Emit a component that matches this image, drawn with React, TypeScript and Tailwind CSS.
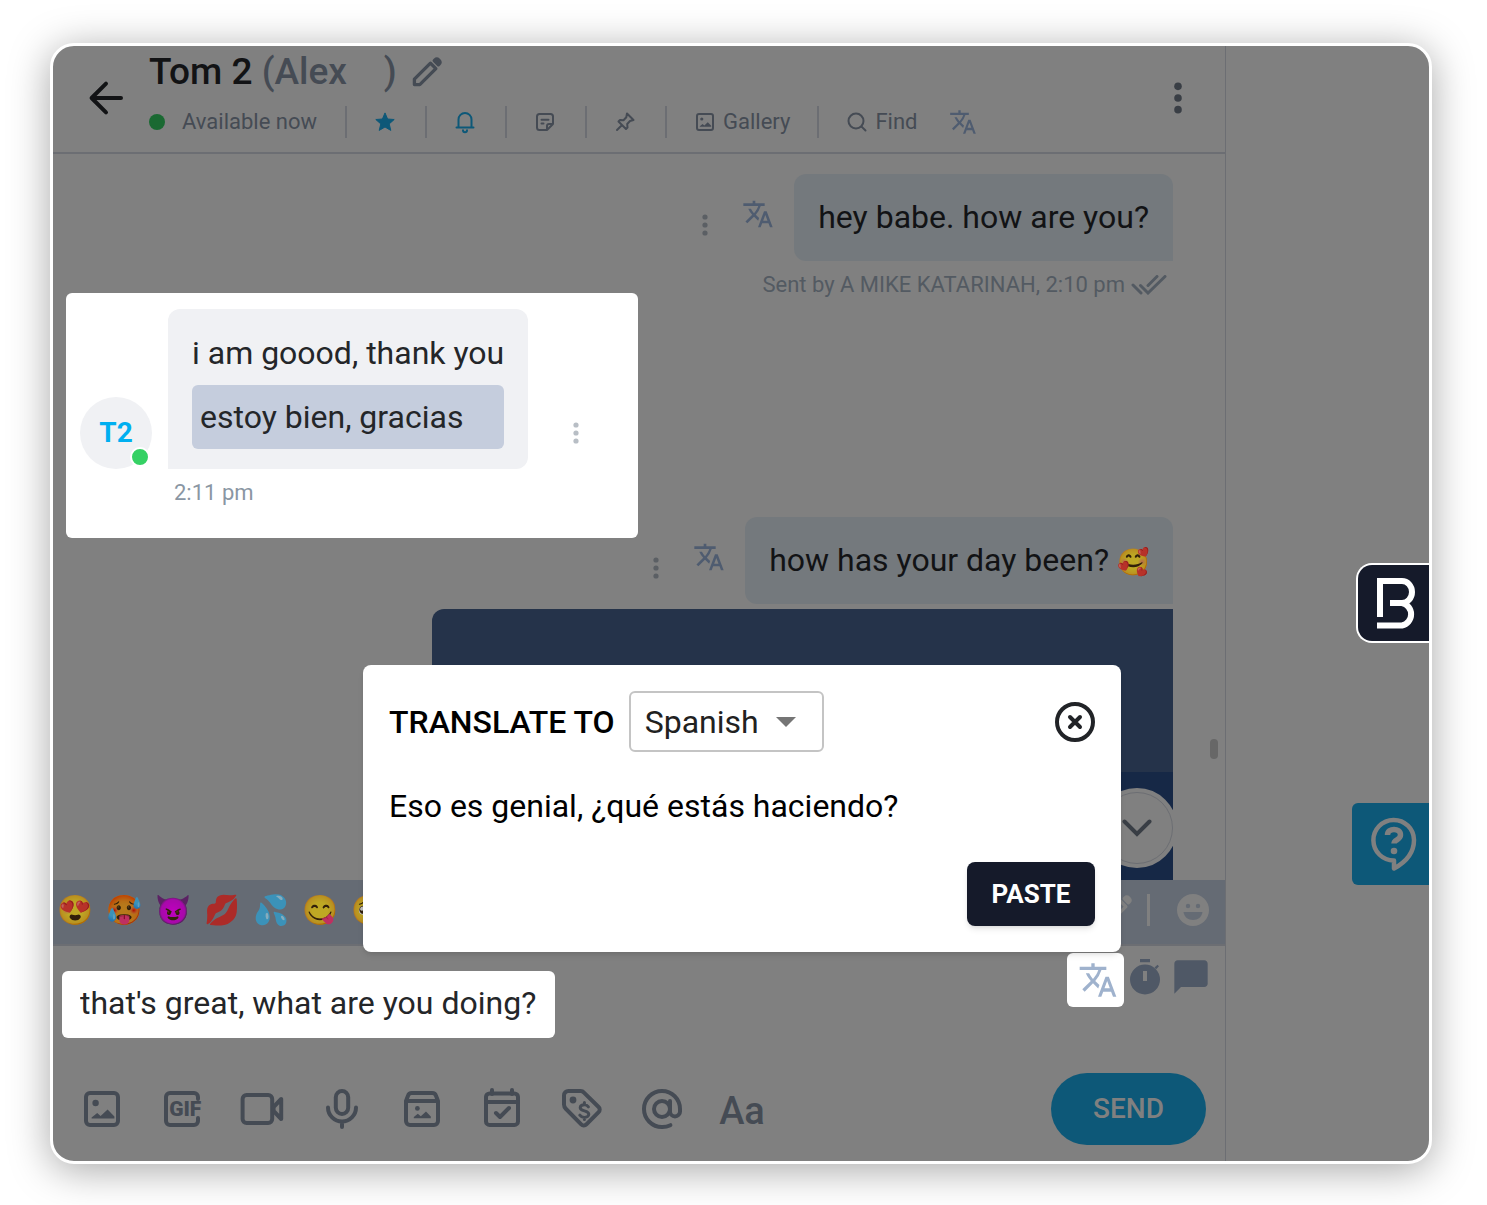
import { useState } from "react";
import type { ReactNode } from "react";
import { MdChatBubble, MdTranslate } from "react-icons/md";

const EMOJIS = ["😍", "🥵", "😈", "💋", "💦", "😋", "🥺"];
const LANGUAGES = ["Spanish", "French", "German", "Italian"];

function Dots({ className }: { className: string }) {
  return (
    <svg viewBox="0 0 6 22" fill="currentColor" className={className} aria-hidden="true">
      <circle cx="3" cy="3" r="2.6" />
      <circle cx="3" cy="11" r="2.6" />
      <circle cx="3" cy="19" r="2.6" />
    </svg>
  );
}

function Icon({ children, className = "size-12", strokeWidth = 2 }: { children: ReactNode; className?: string; strokeWidth?: number }) {
  return (
    <svg
      viewBox="0 0 24 24"
      fill="none"
      stroke="currentColor"
      strokeWidth={strokeWidth}
      strokeLinecap="round"
      strokeLinejoin="round"
      className={className}
      aria-hidden="true"
    >
      {children}
    </svg>
  );
}

function Pencil({ className }: { className: string }) {
  return (
    <Icon className={className} strokeWidth={2.2}>
      <path d="M3.6 20.4v-3.6L14.3 6.100l3.600 3.600L7.200 20.400z" />
      <path d="M17.300 3.900a1.800 1.800 0 0 1 2.500 0l.3.3a1.800 1.800 0 0 1 0 2.500l-.5.5-2.800-2.800z" fill="currentColor" />
    </Icon>
  );
}

const imageShape = (
  <>
    <rect x="4" y="4" width="16" height="16" rx="2" />
    <circle cx="8.8" cy="9" r="1.6" fill="currentColor" stroke="none" />
    <path d="M6.8 16.8v-.6L9.6 14l1.7 1.5 3.5-3.3 3.4 3.5v1.1z" fill="currentColor" stroke="none" />
  </>
);

const TOOLS: { label: string; icon: ReactNode }[] = [
  { label: "Add image", icon: <Icon>{imageShape}</Icon> },
  {
    label: "Add GIF",
    icon: (
      <Icon>
        <path d="M20 7V6a2 2 0 0 0-2-2H6a2 2 0 0 0-2 2v12a2 2 0 0 0 2 2h12a2 2 0 0 0 2-2v-1.5" />
        <text x="5.6" y="15.7" fontSize="10.5" fontWeight="900" fill="currentColor" stroke="none" className="font-[Roboto,sans-serif]">
          GIF
        </text>
      </Icon>
    ),
  },
  {
    label: "Record video",
    icon: (
      <Icon>
        <rect x="2.3" y="5" width="14.8" height="14" rx="2" />
        <path d="M17.8 11l3.800-4v10l-3.800-4z" />
      </Icon>
    ),
  },
  {
    label: "Record voice",
    icon: (
      <Icon>
        <rect x="8.9" y="3" width="6.2" height="11.5" rx="3.1" />
        <path d="M5 11.200a7 7 0 0 0 14 0M12 18.500V21" />
      </Icon>
    ),
  },
  {
    label: "Open vault",
    icon: (
      <Icon>
        <path d="M4 8l1-2.600A2 2 0 0 1 6.900 4h10.200a2 2 0 0 1 1.900 1.400L20 8v10a2 2 0 0 1-2 2H6a2 2 0 0 1-2-2zM4.500 8h15" />
        <circle cx="9.7" cy="11.7" r="1.2" fill="currentColor" stroke="none" />
        <path d="M7.900 16.600v-.6l2-1.600 1.500 1.200 2.600-2.400 2.400 2.500v.9z" fill="currentColor" stroke="none" />
      </Icon>
    ),
  },
  {
    label: "Schedule",
    icon: (
      <Icon>
        <rect x="4" y="4.2" width="16" height="15.8" rx="1.8" />
        <path d="M4 8.500h16M7 2.500v2M17 2.500v2M9 14l2 2 4.500-4.500" />
      </Icon>
    ),
  },
  {
    label: "Set price",
    icon: (
      <Icon>
        <path d="M3 5.200V9.800a3 3 0 0 0 .9 2.100l7.700 7.800a1.800 1.800 0 0 0 2.600 0l6.100-6.100a1.800 1.800 0 0 0 0-2.600l-7.300-7.200A2.400 2.400 0 0 0 11.300 3H5.200A2.200 2.200 0 0 0 3 5.200z" />
        <circle cx="7.5" cy="7.5" r="1.7" fill="currentColor" stroke="none" />
        <path
          d="M15.200 10.900c-.5-.7-1.200-1-2-1-1.200 0-2.100.6-2.100 1.500 0 2 4.300 1.100 4.300 3.200 0 1-1 1.600-2.200 1.600-1 0-1.800-.4-2.300-1.100M13.200 8.800v1M13.200 16.300v1"
          strokeWidth="1.5"
        />
      </Icon>
    ),
  },
  {
    label: "Mention",
    icon: (
      <Icon>
        <circle cx="12" cy="12" r="4" />
        <path d="M16 8v5.200a2.500 2.500 0 0 0 5 0V12a9 9 0 1 0-9 9 9.600 9.600 0 0 0 4.200-.9" />
      </Icon>
    ),
  },
  { label: "Text format", icon: <span className="pt-1 text-[38px] leading-none font-medium">Aa</span> },
];

function HeaderCell({ label, children }: { label: string; children: ReactNode }) {
  return (
    <button type="button" aria-label={label} className="flex h-8 w-20 items-center justify-center border-l-2 border-[#6c6e73] pr-0.5">
      {children}
    </button>
  );
}

function ChatHeader() {
  return (
    <header className="flex items-center border-b-2 border-[#6c6e73] pr-[42px] pb-0.5 pl-[30px]">
      <button type="button" aria-label="Back" className="text-[#121315]">
        <Icon>
          <path d="M19 12H4.500M11.500 4.800L4.300 12l7.200 7.200" />
        </Icon>
      </button>
      <div className="min-w-0 flex-1 pt-1.5 pb-3 pl-[18px]">
        <h1 className="flex h-10 items-center text-[37px] font-medium whitespace-pre text-[#121315]">
          Tom 2 <span className="text-[#454b54]">(Alex{"    "})</span>
          <button type="button" aria-label="Edit name" className="ml-3 text-[#454b54]">
            <Pencil className="size-9" />
          </button>
        </h1>
        <div className="mt-[13px] flex items-center text-[22px] text-[#454b54]">
          <span className="size-4 rounded-full bg-[#1a6932]" />
          <span className="ml-[17px] pr-7 whitespace-nowrap">Available now</span>
          <HeaderCell label="Favourite">
            <svg viewBox="0 0 24 24" fill="#0d5878" stroke="#0d5878" strokeWidth="1" strokeLinejoin="round" className="size-6">
              <path d="M12 2.900l2.600 6.100 6.600.500-5 4.400 1.600 6.500L12 17l-5.800 3.400 1.600-6.500-5-4.400 6.600-.500z" />
            </svg>
          </HeaderCell>
          <HeaderCell label="Notifications">
            <Icon className="size-6 text-[#0d5878]">
              <path d="M3.500 17.500h17M5.500 17.300V9.500a6.500 6.500 0 0 1 13 0v7.800M10 20.300a2 2 0 0 0 4 0" />
            </Icon>
          </HeaderCell>
          <HeaderCell label="Notes">
            <Icon className="size-6">
              <path d="M20 14V6.500A2.500 2.500 0 0 0 17.500 4h-11A2.500 2.500 0 0 0 4 6.500v11A2.500 2.500 0 0 0 6.500 20H14zM20 14h-4a2 2 0 0 0-2 2v4M8.500 9.700h7M8.500 13.500h2" />
            </Icon>
          </HeaderCell>
          <HeaderCell label="Pin">
            <Icon className="size-6">
              <path d="M14 3.500l6.500 6.500-3.500 1-2.800 3 .3 3.500-1.500 1.500-7.500-7.500L7 10l3.500.300 2.800-3zM8.800 15.200L4 20" />
            </Icon>
          </HeaderCell>
          <button type="button" className="flex h-8 items-center gap-1.5 border-l-2 border-[#6c6e73] pr-[27px] pl-[26px]">
            <Icon className="size-6">{imageShape}</Icon>
            Gallery
          </button>
          <button type="button" className="flex h-8 items-center gap-1.5 border-l-2 border-[#6c6e73] pl-[26px]">
            <Icon className="size-6">
              <circle cx="11" cy="11" r="7.5" />
              <path d="M16.600 16.600L20.500 20.500" />
            </Icon>
            Find
          </button>
          <button type="button" aria-label="Translate chat" className="ml-8 text-[#4f5c70]">
            <MdTranslate className="size-7" />
          </button>
        </div>
      </div>
      <button type="button" aria-label="More options" className="text-[#393e45]">
        <Dots className="h-8 w-2.5" />
      </button>
    </header>
  );
}

function SentMessage({ children }: { children: ReactNode }) {
  return (
    <div className="flex items-start justify-end">
      <button type="button" aria-label="Message options" className="mt-10 text-[#5b5f64]">
        <Dots className="h-[22px] w-1.5" />
      </button>
      <button type="button" aria-label="Translate message" className="mt-6 ml-[34px] text-[#4f5c70]">
        <MdTranslate className="size-8" />
      </button>
      <p className="ml-5 rounded-xl rounded-br-none bg-[#74797d] px-6 py-5 text-[32px] leading-[47px] whitespace-nowrap text-[#121315]">
        {children}
      </p>
    </div>
  );
}

function ReceivedMessage() {
  return (
    <div className="ml-[13px] -mb-[21px] flex h-[245px] w-[572px] rounded-md bg-white p-4 pl-3.5">
      <div className="relative mt-[88px] flex size-[72px] items-center justify-center rounded-full bg-[#f0f1f4] text-[28px] font-bold text-[#00aff0]">
        T2
        <span className="absolute right-0.5 bottom-0.5 size-5 rounded-full border-2 border-white bg-[#35d164]" />
      </div>
      <div className="ml-4">
        <div className="rounded-xl rounded-bl-none bg-[#f0f1f4] px-6 py-5 text-[32px] text-[#242629]">
          <p className="leading-12 whitespace-nowrap">i am goood, thank you</p>
          <p className="mt-2 rounded-md bg-[#c5cddd] px-2 leading-16">estoy bien, gracias</p>
        </div>
        <p className="mt-2 ml-1.5 text-[22px] leading-8 text-[#8a96a3]">2:11 pm</p>
      </div>
      <button type="button" aria-label="Message options" className="mt-28 ml-[45px] self-start text-[#b8bec5]">
        <Dots className="h-6 w-1.5" />
      </button>
    </div>
  );
}

function TranslateDialog() {
  const [language, setLanguage] = useState("Spanish");

  return (
    <section
      role="dialog"
      aria-label="Translate"
      className="absolute right-[104px] bottom-[209px] w-[758px] rounded-lg bg-white p-[26px] text-[32px] text-black shadow-md"
    >
      <div className="flex items-center">
        <label htmlFor="language" className="font-medium whitespace-nowrap">
          TRANSLATE TO
        </label>
        <div className="relative ml-3.5">
          <select
            id="language"
            value={language}
            onChange={(e) => setLanguage(e.target.value)}
            className="h-[61px] w-[195px] appearance-none rounded-md border-2 border-[#c4c4c4] bg-white pl-3.5 text-[#212121]"
          >
            {LANGUAGES.map((name) => (
              <option key={name}>{name}</option>
            ))}
          </select>
          <svg viewBox="0 0 20 10" fill="#757575" className="pointer-events-none absolute top-[26px] right-7 h-2.5 w-5">
            <path d="M0 0h20L10 10z" />
          </svg>
        </div>
        <button type="button" aria-label="Close" className="ml-auto text-[#212327]">
          <svg viewBox="0 0 40 40" fill="none" stroke="currentColor" strokeWidth="4" strokeLinecap="round" className="size-10">
            <circle cx="20" cy="20" r="18" />
            <path d="M15 15l10 10M25 15L15 25" />
          </svg>
        </button>
      </div>
      <p className="mt-[30px] leading-12">Eso es genial, ¿qué estás haciendo?</p>
      <div className="mt-8 flex justify-end">
        <button type="button" className="h-16 w-32 rounded-lg bg-[#151a2a] text-[26px] font-bold text-white shadow-md">
          PASTE
        </button>
      </div>
    </section>
  );
}

function Composer() {
  const [draft, setDraft] = useState("that's great, what are you doing?");

  return (
    <footer>
      <div className="flex h-[66px] items-center border-b-2 border-[#6c6e73] bg-[#656b74] pr-[13px] pb-1">
        <div className="flex flex-1">
          {EMOJIS.map((emoji) => (
            <button key={emoji} type="button" className="w-[49px] pr-[5px] text-center text-[29px] leading-none brightness-75">
              {emoji}
            </button>
          ))}
        </div>
        <button type="button" aria-label="Edit emojis" className="text-[#808080]">
          <Pencil className="size-9" />
        </button>
        <span className="ml-3 h-8 w-[3px] bg-[#808080]" />
        <button type="button" aria-label="Emoji picker" className="ml-6 text-[#808080]">
          <svg viewBox="0 0 38 38" className="size-[38px]">
            <circle cx="19" cy="19" r="16" fill="currentColor" />
            <g fill="#656b74">
              <circle cx="14" cy="15" r="2.2" />
              <circle cx="24" cy="15" r="2.2" />
              <path d="M9.500 21h19c-.6 5-4.600 8-9.500 8s-8.900-3-9.500-8z" />
            </g>
          </svg>
        </button>
      </div>
      <div className="flex items-start justify-between pr-3.5 pl-[9px]">
        <input
          aria-label="Message"
          value={draft}
          onChange={(e) => setDraft(e.target.value)}
          className="mt-[25px] h-[67px] w-[493px] rounded-md bg-white px-[18px] pb-1 text-[32px] text-[#242629] outline-none"
        />
        <div className="mt-[7px] flex items-start text-[#4f5866]">
          <button type="button" aria-label="Translate draft" className="flex h-[54px] w-[57px] items-center justify-center rounded-md bg-white pl-1 text-[#9fb2cd]">
            <MdTranslate className="size-10" />
          </button>
          <button type="button" aria-label="Timer" className="ml-[5px] pt-1.5">
            <svg viewBox="0 0 32 36" fill="currentColor" className="h-9 w-8">
              <path fillRule="evenodd" d="M16 5.500a15 15 0 1 1 0 30 15 15 0 0 1 0-30zM14 12v10h4V12z" />
              <path d="M11 0h10v3.200H11zM25.500 8.500l3-2.800 1.500 1.500-2.800 3z" />
            </svg>
          </button>
          <button type="button" aria-label="Templates" className="ml-2.5 pt-1">
            <MdChatBubble className="size-10" />
          </button>
        </div>
      </div>
      <div className="mt-[35px] flex items-center justify-between pr-[19px] pb-4 pl-[9px]">
        <div className="flex text-[#454b54]">
          {TOOLS.map((tool) => (
            <button key={tool.label} type="button" aria-label={tool.label} className="flex h-12 w-20 items-center justify-center">
              {tool.icon}
            </button>
          ))}
        </div>
        <button type="button" className="h-[72px] w-[155px] rounded-full bg-[#0d5878] text-[28px] font-medium text-[#808080]">
          SEND
        </button>
      </div>
    </footer>
  );
}

function SideButtons() {
  return (
    <aside className="flex w-[203px] shrink-0 flex-col items-end pt-[517px]">
      <button type="button" aria-label="Assistant" className="flex h-20 w-[73px] items-center rounded-l-2xl border-2 border-r-0 border-white bg-[#151a2a] pl-[18px]">
        <svg viewBox="0 0 42 54" fill="none" stroke="#fff" strokeWidth="6" className="h-[54px] w-[42px]">
          <path d="M4 41V5h22a10 11 0 0 1 0 22H14M26 27a11.500 11.500 0 0 1 0 22.500H1" />
        </svg>
      </button>
      <button type="button" aria-label="Help" className="mt-40 flex h-[82px] w-[77px] items-center justify-center rounded-l-md bg-[#0d5878] pl-1.5 text-[#808080]">
        <svg viewBox="0 0 46 54" fill="none" stroke="currentColor" strokeWidth="4.5" strokeLinecap="round" strokeLinejoin="round" className="h-[54px] w-[46px]">
          <path d="M23 43.500A20.300 20.300 0 1 1 43 23c0 12-8 22-20 28.500z" />
          <path d="M16.500 18c0-7.500 13-7.500 13 0 0 5-6.500 4.500-6.500 8.500" strokeWidth="5.5" strokeLinecap="butt" />
          <circle cx="23" cy="34" r="3.3" fill="currentColor" stroke="none" />
        </svg>
      </button>
    </aside>
  );
}

export default function App() {
  return (
    <main className="min-h-screen bg-white pt-[43px] pr-[55px] pb-[41px] pl-[50px] font-[Roboto,sans-serif]">
      <div className="flex overflow-hidden rounded-3xl border-[3px] border-white bg-[#808080] shadow-[0_6px_40px_rgba(0,0,0,0.35)]">
        <div className="relative min-w-0 flex-1 border-r border-[#6c6e73]">
          <ChatHeader />
          <div className="relative pt-5">
            <div className="pr-[52px]">
              <SentMessage>hey babe. how are you?</SentMessage>
              <p className="flex items-center justify-end gap-1.5 pt-4 pr-1.5 text-[22px] leading-4 text-[#535a62]">
                Sent by A MIKE KATARINAH, 2:10 pm
                <svg viewBox="0 0 36 20" fill="none" stroke="currentColor" strokeWidth="3" strokeLinecap="round" className="-my-1 h-5 w-9">
                  <path d="M2 10l8 8M9.500 10.500l7.500 7.500L34 1.500M17 10.500L26 1.500" />
                </svg>
              </p>
            </div>
            <ReceivedMessage />
            <div className="pr-[52px]">
              <SentMessage>
                how has your day been? <span className="text-[26px] leading-none brightness-75">🥰</span>
              </SentMessage>
              <div className="mt-[5px] ml-auto flex h-[271px] w-[741px] flex-col justify-end overflow-hidden rounded-tl-xl bg-[#25334a]">
                <div className="relative h-[108px] bg-[#162846]">
                  <button
                    type="button"
                    aria-label="Scroll to latest"
                    className="absolute -right-1 bottom-3 flex size-20 items-center justify-center rounded-full border-4 border-[#808080] bg-[#808080] text-[#393e45]"
                  >
                    <span className="flex size-full items-center justify-center rounded-full border border-[#6c6e73]">
                      <svg viewBox="0 0 30 18" fill="none" stroke="currentColor" strokeWidth="4" strokeLinecap="round" className="h-[18px] w-[30px]">
                        <path d="M2.500 2.500l12.500 12.500 12.500-12.500" />
                      </svg>
                    </span>
                  </button>
                </div>
              </div>
            </div>
            <span className="absolute right-[7px] bottom-[121px] h-5 w-2 rounded-full bg-[#676767]" />
          </div>
          <Composer />
          <TranslateDialog />
        </div>
        <SideButtons />
      </div>
    </main>
  );
}
